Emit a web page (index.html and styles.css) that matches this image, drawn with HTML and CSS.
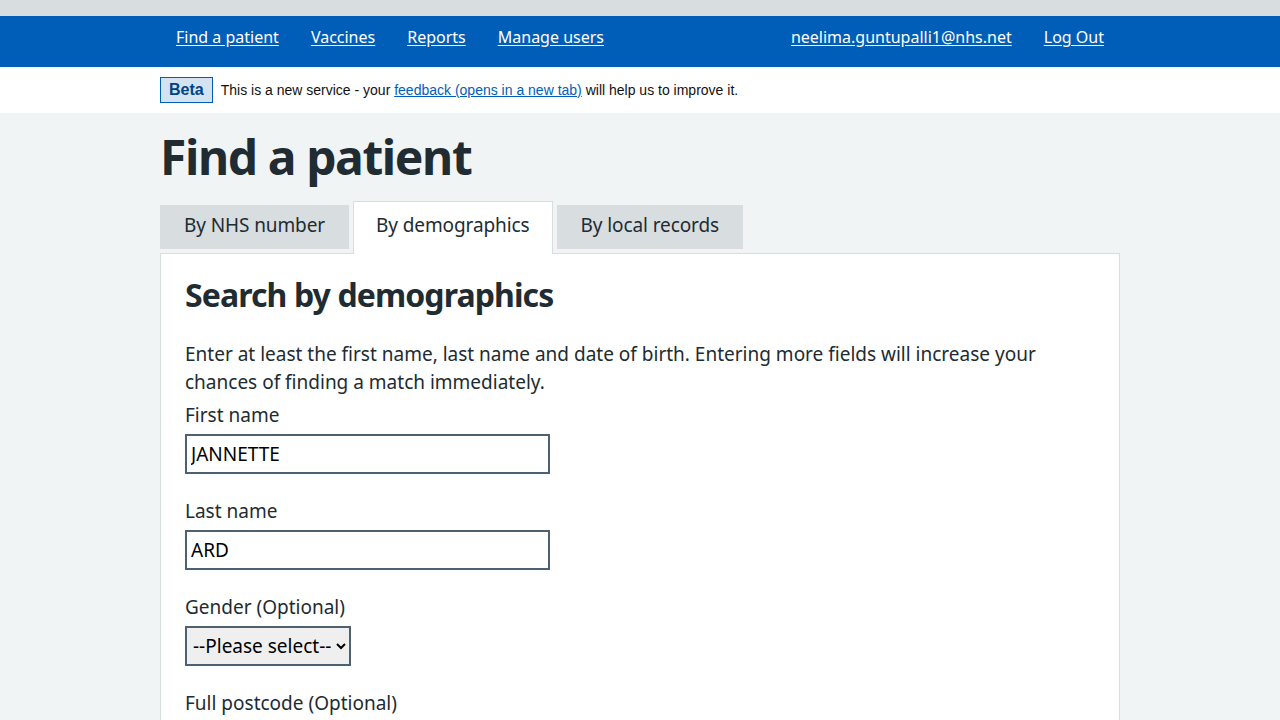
FILE: index.html
```html
<!DOCTYPE html>
<html lang="en">
<head>
<meta charset="utf-8">
<title>Find a patient</title>
<link rel="stylesheet" href="styles.css">
</head>
<body>
<div class="topbar"></div>
<header class="header">
  <div class="container header-inner">
    <nav class="nav">
      <a href="#">Find a patient</a>
      <a href="#">Vaccines</a>
      <a href="#">Reports</a>
      <a href="#">Manage users</a>
    </nav>
    <nav class="nav">
      <a href="#">neelima.guntupalli1@nhs.net</a>
      <a href="#">Log Out</a>
    </nav>
  </div>
</header>
<div class="beta">
  <div class="container beta-inner">
    <strong class="beta-tag">Beta</strong>
    <span class="beta-text">This is a new service - your <a href="#">feedback (opens in a new tab)</a> will help us to improve it.</span>
  </div>
</div>
<main class="main">
  <div class="container">
    <h1 class="title">Find a patient</h1>
    <ul class="tabs">
      <li class="tab"><a href="#">By NHS number</a></li>
      <li class="tab tab-active"><a href="#">By demographics</a></li>
      <li class="tab"><a href="#">By local records</a></li>
    </ul>
    <section class="panel">
      <h2 class="panel-title">Search by demographics</h2>
      <p class="hint">Enter at least the first name, last name and date of birth. Entering more fields will increase your chances of finding a match immediately.</p>
      <div class="field">
        <label class="label" for="fn">First name</label>
        <input class="input" id="fn" type="text" value="JANNETTE">
      </div>
      <div class="field">
        <label class="label" for="ln">Last name</label>
        <input class="input" id="ln" type="text" value="ARD">
      </div>
      <div class="field">
        <label class="label" for="gd">Gender (Optional)</label>
        <select class="select" id="gd"><option>--Please select--</option></select>
      </div>
      <div class="field">
        <label class="label" for="pc">Full postcode (Optional)</label>
        <input class="input" id="pc" type="text">
      </div>
    </section>
  </div>
</main>
</body>
</html>
```
FILE: styles.css
```css
* { box-sizing: border-box; }
html, body { margin: 0; padding: 0; }
body {
  font-family: "Noto Sans", Roboto, Arial, sans-serif;
  color: #212b32;
  background: #f0f4f5;
}
.container {
  width: 960px;
  margin: 0 auto;
}
.topbar {
  height: 16px;
  background: #d8dde0;
}
.header {
  background: #005eb8;
  height: 51px;
}
.header-inner {
  display: flex;
  justify-content: space-between;
  align-items: flex-start;
  padding-top: 9px;
  height: 100%;
}
.nav { display: flex; }
.nav a {
  color: #fff;
  font-size: 16px;
  line-height: 24px;
  padding: 0 16px;
  text-decoration: underline;
  text-underline-offset: 2px;
}
.beta {
  background: #fff;
  height: 46px;
}
.beta-inner {
  display: flex;
  align-items: center;
  height: 100%;
  font-family: "Liberation Sans", Arial, sans-serif;
}
.beta-tag {
  display: inline-block;
  height: 26px;
  line-height: 24px;
  padding: 0 8px;
  border: 1px solid #005eb8;
  background: #d3e3f2;
  color: #004387;
  font-size: 16px;
  font-weight: bold;
  margin-right: 8px;
}
.beta-text {
  font-size: 14px;
  color: #111;
}
.beta-text a { color: #005eb8; }
.main { padding-top: 16px; }
.title {
  font-size: 48px;
  line-height: 56px;
  font-weight: bold;
  letter-spacing: -1.4px;
  margin: 0 0 16px;
}
.tabs {
  list-style: none;
  margin: 0;
  padding: 0;
  display: flex;
  align-items: flex-start;
  gap: 4px;
  position: relative;
  z-index: 1;
}
.tab {
  margin-top: 4px;
  background: #d8dde0;
  height: 44px;
}
.tab a {
  display: block;
  padding: 0 24px;
  line-height: 40px;
  font-size: 19px;
  letter-spacing: -0.1px;
  color: #212b32;
  text-decoration: none;
}
.tab-active {
  margin-top: 0;
  height: 53px;
  background: #fff;
  border: 1px solid #d8dde0;
  border-bottom: 0;
  margin-bottom: -1px;
}
.tab-active a {
  line-height: 46px;
  padding: 0 22px;
}
.panel {
  background: #fff;
  border: 1px solid #d8dde0;
  padding: 21px 24px 40px;
}
.panel-title {
  font-size: 32px;
  line-height: 40px;
  font-weight: bold;
  letter-spacing: -0.9px;
  margin: 0 0 25px;
}
.hint {
  font-size: 19px;
  line-height: 28px;
  margin: 0 0 5px;
}
.field { margin-bottom: 23px; }
.label {
  display: block;
  font-size: 19px;
  line-height: 28px;
  margin-bottom: 5px;
}
.input {
  display: block;
  width: 365px;
  height: 40px;
  border: 2px solid #4c6272;
  border-radius: 0;
  padding: 4px;
  font-family: inherit;
  font-size: 19px;
  color: #000;
  background: #fff;
}
.select {
  display: block;
  width: 166px;
  height: 40px;
  border: 2px solid #4c6272;
  border-radius: 0;
  padding: 0 2px;
  font-family: inherit;
  font-size: 19px;
  color: #000;
  background: #efefef;
}
```
